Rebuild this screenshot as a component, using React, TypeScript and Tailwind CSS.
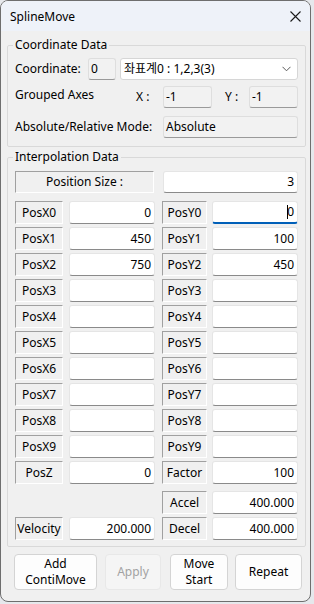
import React from "react";

const sunken =
  "flex items-center justify-center border border-t-[#a0a0a0] border-l-[#a0a0a0] border-b-white border-r-white";
const edit =
  "flex items-center justify-end bg-white border border-[#e5e5e5] border-b-[#8a8a8a] rounded-[3px] pr-[3px]";
const roEdit =
  "flex items-center bg-[#f2f2f2] border border-[#dedede] border-b-[#9a9a9a] rounded-[3px] pl-[2px]";

function PosRow({ x, xv, y, yv, focus }: { x: string; xv?: string; y: string; yv?: string; focus?: boolean }) {
  return (
    <div className="flex h-[23px] items-center">
      <div className={`${sunken} h-[23px] w-[48px]`}>{x}</div>
      <div className={`${edit} ml-[6px] h-[23px] w-[86px]`}>{xv}</div>
      <div className={`${sunken} ml-[7px] h-[23px] w-[45px]`}>{y}</div>
      {focus ? (
        <div className="ml-[5px] flex h-[23px] w-[86px] items-center justify-end rounded-[3px] border border-[#e5e5e5] border-b-2 border-b-[#005fb8] bg-white pr-[3px]">
          <span className="mr-[-1px] h-[14px] w-[1px] bg-black" />
          <span>{yv}</span>
        </div>
      ) : (
        <div className={`${edit} ml-[5px] h-[23px] w-[86px]`}>{yv}</div>
      )}
    </div>
  );
}

function Btn({ children, w, ml, disabled }: { children: React.ReactNode; w: string; ml: string; disabled?: boolean }) {
  return (
    <div
      className={`${w} ${ml} flex h-[36px] flex-col items-center justify-center rounded-[4px] border text-center leading-[16px] ${
        disabled ? "border-[#e8e8e8] bg-[#f5f5f5] text-[#a2a2a2]" : "border-[#d4d4d4] bg-[#fdfdfd] text-black"
      }`}
    >
      {children}
    </div>
  );
}

export default function App() {
  const rows = [
    ["PosX0", "0", "PosY0", "0"],
    ["PosX1", "450", "PosY1", "100"],
    ["PosX2", "750", "PosY2", "450"],
    ["PosX3", "", "PosY3", ""],
    ["PosX4", "", "PosY4", ""],
    ["PosX5", "", "PosY5", ""],
    ["PosX6", "", "PosY6", ""],
    ["PosX7", "", "PosY7", ""],
    ["PosX8", "", "PosY8", ""],
    ["PosX9", "", "PosY9", ""],
  ];
  return (
    <div className="h-[604px] w-[314px] bg-[#e6e8ec] font-['Segoe_UI','Noto_Sans','Noto_Sans_CJK_KR',sans-serif] text-[12px] leading-[16px] text-black">
      <div className="flex h-[602px] w-[311px] flex-col overflow-hidden rounded-[8px] border border-[#6e6e6e] bg-[#f0f0f0]">
        {/* title bar */}
        <div className="flex h-[30px] shrink-0 items-center justify-between bg-[#eef2f9] pl-[9px] pr-[9px]">
          <span className="mt-[1px]">SplineMove</span>
          <svg width="11" height="11" viewBox="0 0 11 11" className="mt-[1px]">
            <path d="M0.5 0.5 L10.5 10.5 M10.5 0.5 L0.5 10.5" stroke="#1a1a1a" strokeWidth="1.1" />
          </svg>
        </div>

        {/* Coordinate Data */}
        <fieldset className="ml-[6px] mt-[6px] w-[299px] rounded-[2px] border border-[#d9d9d9] pb-[8px] pl-[7px] pt-[5px]">
          <legend className="ml-[-2px] px-[2px]">Coordinate Data</legend>
          <div className="flex h-[22px] items-center">
            <span className="w-[73px]">Coordinate:</span>
            <div className={`${roEdit} h-[22px] w-[28px]`}>0</div>
            <div className="ml-[4px] flex h-[22px] w-[178px] items-center justify-between rounded-[3px] border border-[#d6d6d6] bg-white pl-[3px] pr-[6px]">
              <span>좌표계0 : 1,2,3(3)</span>
              <svg width="9" height="6" viewBox="0 0 9 6">
                <path d="M0.5 0.8 L4.5 4.8 L8.5 0.8" fill="none" stroke="#5a5a5a" strokeWidth="1" />
              </svg>
            </div>
          </div>
          <div className="mt-[6px] flex h-[22px] items-center">
            <span className="mb-[4px] w-[121px]">Grouped Axes</span>
            <span className="w-[27px]">X :</span>
            <div className={`${roEdit} h-[22px] w-[49px]`}>-1</div>
            <span className="ml-[13px] w-[24px]">Y :</span>
            <div className={`${roEdit} h-[22px] w-[49px]`}>-1</div>
          </div>
          <div className="mt-[8px] flex h-[22px] items-center">
            <span className="w-[148px]">Absolute/Relative Mode:</span>
            <div className={`${roEdit} h-[22px] w-[135px]`}>Absolute</div>
          </div>
        </fieldset>

        {/* Interpolation Data */}
        <fieldset className="ml-[6px] mt-[2px] w-[299px] rounded-[2px] border border-[#d9d9d9] pb-[6px] pl-[7px] pt-[6px]">
          <legend className="ml-[-2px] px-[2px]">Interpolation Data</legend>
          <div className="flex h-[22px] items-center">
            <div className={`${sunken} h-[22px] w-[139px]`}>Position Size :</div>
            <div className={`${edit} ml-[9px] h-[22px] w-[135px]`}>3</div>
          </div>
          <div className="mt-[8px] flex flex-col gap-[3px]">
            {rows.map((r, i) => (
              <PosRow key={r[0]} x={r[0]} xv={r[1]} y={r[2]} yv={r[3]} focus={i === 0} />
            ))}
            <PosRow x="PosZ" xv="0" y="Factor" yv="100" />
          </div>
          <div className="mt-[7px] flex h-[23px] items-center">
            <div className="w-[147px]" />
            <div className={`${sunken} h-[23px] w-[45px]`}>Accel</div>
            <div className={`${edit} ml-[5px] h-[23px] w-[86px]`}>400.000</div>
          </div>
          <div className="mt-[3px] flex h-[23px] items-center">
            <div className={`${sunken} h-[23px] w-[48px]`}>Velocity</div>
            <div className={`${edit} ml-[6px] h-[23px] w-[86px]`}>200.000</div>
            <div className={`${sunken} ml-[7px] h-[23px] w-[45px]`}>Decel</div>
            <div className={`${edit} ml-[5px] h-[23px] w-[86px]`}>400.000</div>
          </div>
        </fieldset>

        {/* buttons */}
        <div className="mt-[7px] flex pl-[13px]">
          <Btn w="w-[83px]" ml="ml-0">
            <span>Add</span>
            <span>ContiMove</span>
          </Btn>
          <Btn w="w-[56px]" ml="ml-[8px]" disabled>
            Apply
          </Btn>
          <Btn w="w-[58px]" ml="ml-[9px]">
            <span>Move</span>
            <span>Start</span>
          </Btn>
          <Btn w="w-[67px]" ml="ml-[7px]">
            Repeat
          </Btn>
        </div>
      </div>
    </div>
  );
}
